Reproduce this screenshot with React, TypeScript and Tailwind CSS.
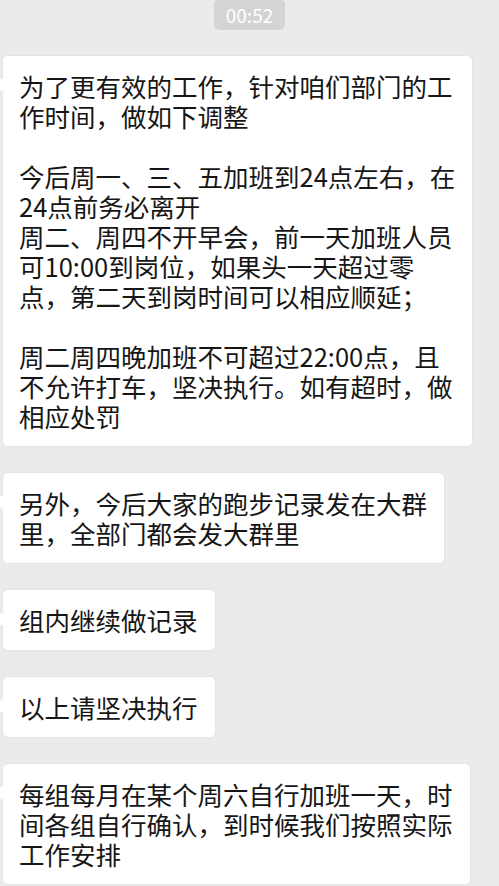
const messages: string[][] = [
  [
    "为了更有效的工作，针对咱们部门的工",
    "作时间，做如下调整",
    "",
    "今后周一、三、五加班到24点左右，在",
    "24点前务必离开",
    "周二、周四不开早会，前一天加班人员",
    "可10:00到岗位，如果头一天超过零",
    "点，第二天到岗时间可以相应顺延；",
    "",
    "周二周四晚加班不可超过22:00点，且",
    "不允许打车，坚决执行。如有超时，做",
    "相应处罚",
  ],
  ["另外，今后大家的跑步记录发在大群", "里，全部门都会发大群里"],
  ["组内继续做记录"],
  ["以上请坚决执行"],
  [
    "每组每月在某个周六自行加班一天，时",
    "间各组自行确认，到时候我们按照实际",
    "工作安排",
  ],
];

function Bubble({ lines }: { lines: string[] }) {
  return (
    <div className="relative rounded-[6px] border border-[#e4e4e4] bg-white pl-[16px] pr-[17px] py-[15px] text-[25.5px] leading-[30px] text-[#161616] whitespace-nowrap">
      {/* tail, mostly cut off by the screen edge */}
      <span className="absolute left-[-6px] top-[24px] h-[10px] w-[10px] rotate-45 bg-white" />
      {lines.map((line, i) =>
        line ? (
          <div key={i} className="relative">{line}</div>
        ) : (
          <div key={i} className="h-[30px]" />
        )
      )}
    </div>
  );
}

export default function App() {
  return (
    <div
      className="h-screen overflow-hidden bg-[#ebebeb]"
      style={{ fontFamily: '"Noto Sans CJK SC", "Noto Sans", sans-serif' }}
    >
      {/* Time stamp */}
      <div className="flex justify-center">
        <span className="h-[30px] rounded-b-[6px] rounded-t-[4px] bg-[#d4d4d4] px-[12px] text-[19px] leading-[30px] text-white">
          00:52
        </span>
      </div>

      {/* Messages */}
      <div className="mt-[25px] flex flex-col items-start gap-[25px] pl-[2px]">
        {messages.map((m, i) => (
          <Bubble key={i} lines={m} />
        ))}
      </div>
    </div>
  );
}
